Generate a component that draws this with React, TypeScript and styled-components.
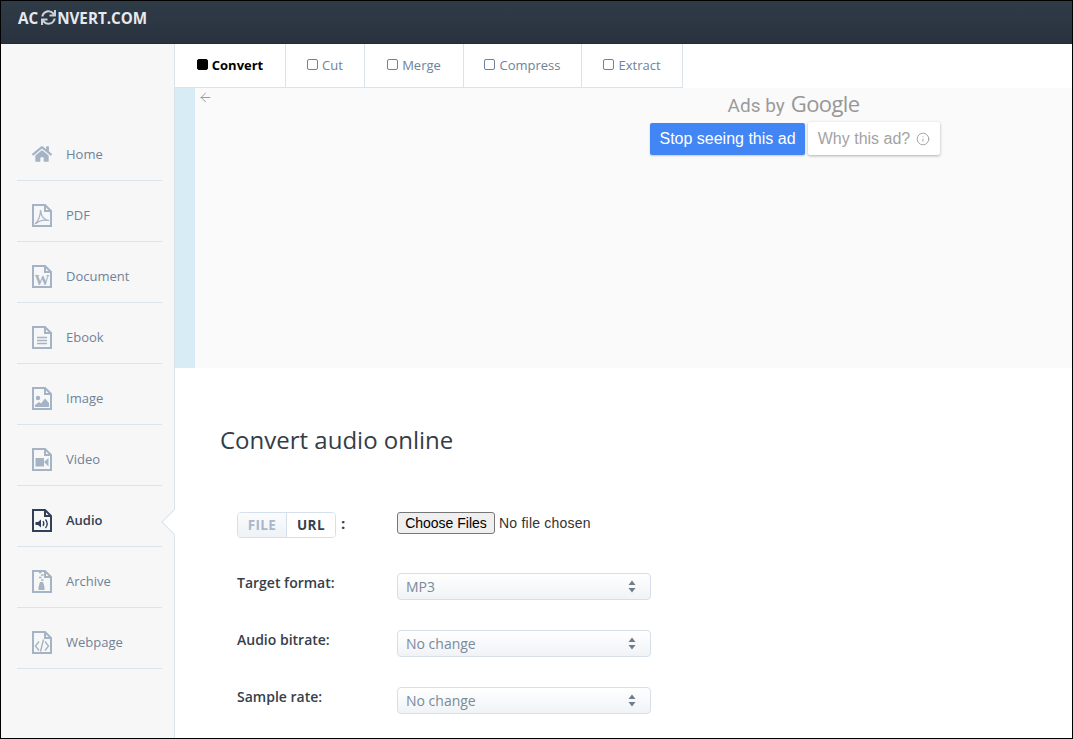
import { Fragment, ReactNode } from "react";
import { createGlobalStyle, styled } from "styled-components";
import { FaHome, FaSync } from "react-icons/fa";
import { ArrowLeft, Info } from "lucide-react";

const GlobalStyle = createGlobalStyle`
  html, body {
    margin: 0;
    padding: 0;
    height: 100%;
    overflow: hidden;
    background: #fff;
    font-family: "Open Sans", sans-serif;
  }
  * {
    box-sizing: border-box;
  }
`;

const Frame = styled.div`
  display: flex;
  flex-direction: column;
  width: 100vw;
  height: 100vh;
  border: 1px solid #000;
  overflow: hidden;
`;

const Header = styled.header`
  flex: 0 0 43px;
  display: flex;
  align-items: center;
  padding: 0 0 9px 17px;
  background: linear-gradient(#2f3b47, #29333f);
  border-bottom: 1px solid #232c36;
`;

const Logo = styled.div`
  display: flex;
  align-items: center;
  font-size: 15.2px;
  font-weight: 700;
  color: #e6eaee;
  svg {
    margin: 0 1px 0 3px;
    color: #c9d0d6;
  }
`;

const Body = styled.div`
  flex: 1;
  display: flex;
  min-height: 0;
`;

const Sidebar = styled.nav`
  flex: 0 0 174px;
  padding: 76px 12px 0 16px;
  background: #f7f7f7;
  border-right: 1px solid #d9e3ec;
`;

const NavItem = styled.a<{ $active?: boolean }>`
  position: relative;
  display: flex;
  align-items: center;
  gap: 14px;
  height: 61px;
  padding: 8px 0 0 15px;
  border-bottom: 1px solid #dbe4ec;
  font-size: 13px;
  font-weight: ${(props) => (props.$active ? 600 : 400)};
  color: ${(props) => (props.$active ? "#2f4058" : "#6f8299")};

  ${(props) =>
    props.$active &&
    `&::after {
      content: "";
      position: absolute;
      top: 27px;
      right: -21px;
      width: 17px;
      height: 17px;
      background: #fff;
      border-left: 1px solid #d9e3ec;
      border-bottom: 1px solid #d9e3ec;
      transform: rotate(45deg);
    }`}
`;

const NavIcon = styled.span`
  flex: 0 0 20px;
  min-width: 0;
  display: flex;
  justify-content: center;
`;

const Main = styled.main`
  flex: 1;
  min-width: 0;
  background: #fff;
  z-index: 1;
`;

const Tabs = styled.div`
  display: flex;
  height: 44px;
`;

const Tab = styled.a<{ $active?: boolean; $width: number }>`
  display: flex;
  align-items: center;
  justify-content: center;
  gap: 4px;
  width: ${(props) => props.$width}px;
  padding-bottom: 2px;
  border-right: 1px solid #d9e3ec;
  border-bottom: 1px solid #d9e3ec;
  font-size: 13px;
  font-weight: ${(props) => (props.$active ? 700 : 400)};
  color: ${(props) => (props.$active ? "#000" : "#6f8299")};
`;

const TabMark = styled.span<{ $active?: boolean }>`
  width: 11px;
  height: 11px;
  border-radius: 2px;
  border: 1px solid ${(props) => (props.$active ? "#000" : "#6f8299")};
  background: ${(props) => (props.$active ? "#000" : "transparent")};
`;

const AdRow = styled.div`
  display: flex;
  height: 280px;
  background: #fafafa;
  border-left: 20px solid #d8ecf6;
`;

const AdBack = styled.span`
  flex: 0 0 455px;
  padding-left: 3px;
  color: #7c7c7c;
`;

const AdFeedback = styled.div`
  display: flex;
  flex-direction: column;
  align-items: center;
  width: 290px;
`;

const AdsBy = styled.div`
  display: flex;
  align-items: baseline;
  gap: 6px;
  height: 34px;
  margin-right: 3px;
  line-height: 30px;
  font-family: "Roboto", sans-serif;
  font-size: 19px;
  color: #9b9b9b;
`;

const GoogleWord = styled.span`
  font-family: "Open Sans", sans-serif;
  font-size: 22px;
  font-weight: 500;
  letter-spacing: -0.6px;
  color: #979797;
`;

const AdButtons = styled.div`
  display: flex;
  align-items: center;
  gap: 3px;
`;

const StopButton = styled.button`
  width: 155px;
  height: 32px;
  padding: 0;
  border: none;
  border-radius: 2px;
  background: #4285f4;
  color: #fff;
  font-family: "Liberation Sans", Arial, sans-serif;
  font-size: 16px;
  box-shadow: 0 1px 2px rgba(0, 0, 0, 0.2);
`;

const WhyButton = styled.button`
  display: flex;
  align-items: center;
  justify-content: center;
  gap: 6px;
  width: 132px;
  height: 33px;
  padding: 0;
  border: none;
  border-radius: 2px;
  background: #fff;
  color: #a3a3a3;
  font-family: "Liberation Sans", Arial, sans-serif;
  font-size: 16px;
  box-shadow: 0 1px 3px rgba(0, 0, 0, 0.3);
`;

const Content = styled.section`
  padding: 55px 0 0 45px;
`;

const Title = styled.h1`
  margin: 0 0 56px;
  font-size: 24px;
  line-height: 33px;
  font-weight: 400;
  color: #333d47;
`;

const Form = styled.div`
  display: grid;
  grid-template-columns: 160px 254px;
  row-gap: 30px;
  padding-left: 17px;
`;

const FieldLabel = styled.label`
  font-size: 14px;
  line-height: 20px;
  font-weight: 600;
  color: #36404a;
`;

const SourceLabel = styled.div`
  display: flex;
  align-items: flex-start;
  gap: 5px;
  margin-bottom: 5px;
  font-size: 15px;
  line-height: 22px;
  font-weight: 700;
  color: #36404a;
`;

const SourceToggle = styled.div`
  display: flex;
  width: 99px;
  height: 26px;
  border: 1px solid #d6e0ea;
  border-radius: 4px;
  overflow: hidden;
`;

const SourceOption = styled.span<{ $active?: boolean }>`
  flex: ${(props) => (props.$active ? "0 0 49px" : 1)};
  display: flex;
  align-items: center;
  justify-content: center;
  font-size: 13.5px;
  font-weight: 700;
  letter-spacing: 0.4px;
  color: ${(props) => (props.$active ? "#a9b7c8" : "#36424f")};
  background: ${(props) =>
    props.$active ? "linear-gradient(#fafbfc, #eef2f6)" : "#fff"};
  border-right: ${(props) => (props.$active ? "1px solid #d6e0ea" : "none")};
`;

const FilePicker = styled.div`
  display: flex;
  align-items: flex-start;
  gap: 4px;
  font-family: "Liberation Sans", Arial, sans-serif;
  font-size: 14px;
  color: #333;
`;

const FileButton = styled.button`
  width: 98px;
  height: 22px;
  padding: 0;
  background: #efefef;
  border: 1px solid #767676;
  border-radius: 3px;
  color: #000;
  font-family: inherit;
  font-size: 14px;
`;

const FileName = styled.span`
  line-height: 22px;
  letter-spacing: 0.22px;
`;

const Select = styled.div`
  display: flex;
  align-items: center;
  justify-content: space-between;
  height: 27px;
  padding: 0 14px 0 8px;
  background: linear-gradient(#fff, #f0f3f6);
  border: 1px solid #d6e0ea;
  border-radius: 4px;
  font-size: 14px;
  color: #7b8a9a;
`;

const FileSvg = styled.svg<{ $active?: boolean }>`
  display: block;
  color: ${(props) => (props.$active ? "#2f4058" : "#a5b3c6")};
`;

const FileIcon = ({
  children,
  active,
}: {
  children: ReactNode;
  active?: boolean;
}) => (
  <FileSvg $active={active} width="20" height="23" viewBox="0 0 20 23" fill="none">
    <path
      d="M1 1H13L19 7V22H1Z M13 1V7H19"
      stroke="currentColor"
      strokeWidth="2"
    />
    {children}
  </FileSvg>
);

const navItems: { label: string; active?: boolean; icon: ReactNode }[] = [
  {
    label: "Home",
    icon: <FaHome size={22} color="#a5b3c6" />,
  },
  {
    label: "PDF",
    icon: (
      <FileIcon>
        <path
          d="M3 20C6 18 8.500 12 8.500 6C9 12 12 16 17 16.500C12.500 15.500 7.500 16.500 4 19.500"
          stroke="currentColor"
          strokeWidth="1.2"
        />
      </FileIcon>
    ),
  },
  {
    label: "Document",
    icon: (
      <FileIcon>
        <text
          x="10"
          y="20"
          textAnchor="middle"
          fontFamily="Liberation Serif, serif"
          fontWeight="700"
          fontSize="15"
          fill="currentColor"
        >
          W
        </text>
      </FileIcon>
    ),
  },
  {
    label: "Ebook",
    icon: (
      <FileIcon>
        <path
          d="M5 11.500H15M5 14.500H15M5 17.500H15"
          stroke="currentColor"
          strokeWidth="1.4"
        />
      </FileIcon>
    ),
  },
  {
    label: "Image",
    icon: (
      <FileIcon>
        <circle cx="6" cy="11" r="2.200" fill="currentColor" />
        <path d="M3 20V18L7 15L9 16.500L13 11.500L17 16V20Z" fill="currentColor" />
      </FileIcon>
    ),
  },
  {
    label: "Video",
    icon: (
      <FileIcon>
        <path
          d="M3.500 10H12V18.500H3.500Z M12 14L16.500 10V18.500Z"
          fill="currentColor"
        />
      </FileIcon>
    ),
  },
  {
    label: "Audio",
    active: true,
    icon: (
      <FileIcon active>
        <path d="M3.500 13H6L9 10.500V18.500L6 16H3.500Z" fill="currentColor" />
        <path
          d="M11 12C12 13.500 12 15.500 11 17M13.500 10.500C15.500 13 15.500 16.500 13.500 19"
          stroke="currentColor"
          strokeWidth="1.300"
        />
      </FileIcon>
    ),
  },
  {
    label: "Archive",
    icon: (
      <FileIcon>
        <path
          d="M7 2.500H9.500M9 5H11.500M7 7.500H9.500M9 10H11.500"
          stroke="currentColor"
          strokeWidth="1.300"
        />
        <path
          d="M8 12H11L12.500 17V20H6.500V17Z"
          fill="currentColor"
        />
      </FileIcon>
    ),
  },
  {
    label: "Webpage",
    icon: (
      <FileIcon>
        <path
          d="M7 10.500L3.500 15L7 19.500M13 10.500L16.500 15L13 19.500M11.500 8.500L8.500 20.500"
          stroke="currentColor"
          strokeWidth="1.400"
        />
      </FileIcon>
    ),
  },
];

const tabs = [
  { label: "Convert", width: 111 },
  { label: "Cut", width: 79 },
  { label: "Merge", width: 99 },
  { label: "Compress", width: 118 },
  { label: "Extract", width: 101 },
];

const SelectArrows = () => (
  <svg width="8" height="13" viewBox="0 0 8 13" fill="#6f7c8a">
    <path d="M4 0.500L7.500 5H0.500Z M4 12.500L0.500 8H7.500Z" />
  </svg>
);

const selects = [
  { label: "Target format:", value: "MP3" },
  { label: "Audio bitrate:", value: "No change" },
  { label: "Sample rate:", value: "No change" },
];

export default function App() {
  return (
    <>
      <GlobalStyle />
      <Frame>
        <Header>
          <Logo>
            AC
            <FaSync size={15} />
            NVERT.COM
          </Logo>
        </Header>
        <Body>
          <Sidebar>
            {navItems.map((item) => (
              <NavItem key={item.label} $active={item.active}>
                <NavIcon>{item.icon}</NavIcon>
                {item.label}
              </NavItem>
            ))}
          </Sidebar>
          <Main>
            <Tabs>
              {tabs.map((tab, index) => (
                <Tab key={tab.label} $active={index === 0} $width={tab.width}>
                  <TabMark $active={index === 0} />
                  {tab.label}
                </Tab>
              ))}
            </Tabs>
            <AdRow>
              <AdBack>
                <ArrowLeft size={15} strokeWidth={1.2} />
              </AdBack>
              <AdFeedback>
                <AdsBy>
                  Ads by <GoogleWord>Google</GoogleWord>
                </AdsBy>
                <AdButtons>
                  <StopButton>Stop seeing this ad</StopButton>
                  <WhyButton>
                    Why this ad? <Info size={14} strokeWidth={1.6} />
                  </WhyButton>
                </AdButtons>
              </AdFeedback>
            </AdRow>
            <Content>
              <Title>Convert audio online</Title>
              <Form>
                <SourceLabel>
                  <SourceToggle>
                    <SourceOption $active>FILE</SourceOption>
                    <SourceOption>URL</SourceOption>
                  </SourceToggle>
                  :
                </SourceLabel>
                <FilePicker>
                  <FileButton>Choose Files</FileButton>
                  <FileName>No file chosen</FileName>
                </FilePicker>
                {selects.map((field) => (
                  <Fragment key={field.label}>
                    <FieldLabel>{field.label}</FieldLabel>
                    <Select>
                      {field.value}
                      <SelectArrows />
                    </Select>
                  </Fragment>
                ))}
              </Form>
            </Content>
          </Main>
        </Body>
      </Frame>
    </>
  );
}
